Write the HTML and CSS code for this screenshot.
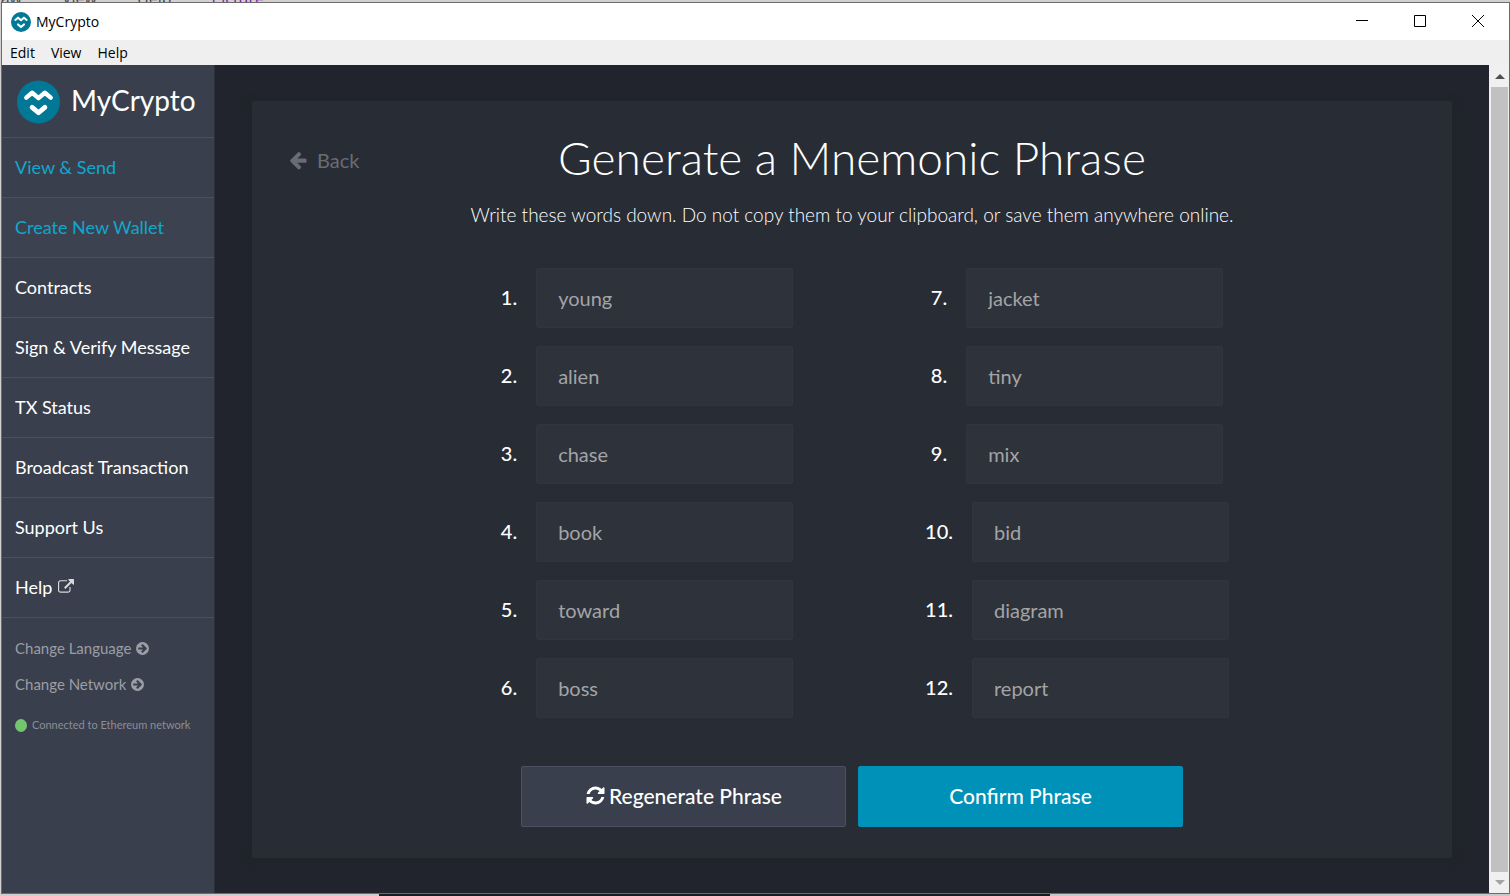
FILE: index.html
```
<!DOCTYPE html>
<html lang="en">
<head>
<meta charset="utf-8">
<title>MyCrypto</title>
<link rel="stylesheet" href="styles.css">
</head>
<body>
<svg class="sprite" aria-hidden="true">
  <symbol id="logo" viewBox="0 0 44 44"><circle cx="22" cy="22" r="22" fill="#007896"/><path d="M9.500 17.500L15.500 12.500L22 18L28.500 12.500L34.500 17.500" fill="none" stroke="#fff" stroke-width="4.600" stroke-linecap="round" stroke-linejoin="round"/><path d="M15.500 27.500L22 33L28.500 27.500" fill="none" stroke="#fff" stroke-width="5" stroke-linecap="round" stroke-linejoin="round"/></symbol>
  <symbol id="arrow-circle" viewBox="0 0 1792 1792"><path d="M1413 896q0-27-18-45l-91-91-362-362q-18-18-45-18t-45 18l-91 91q-18 18-18 45t18 45l189 189h-502q-26 0-45 19t-19 45v128q0 26 19 45t45 19h502l-189 189q-19 19-19 45t19 45l91 91q18 18 45 18t45-18l362-362 91-91q18-18 18-45zm251 0q0 209-103 385.500t-279.500 279.500-385.500 103-385.500-103-279.500-279.500-103-385.500 103-385.500 279.500-279.500 385.500-103 385.500 103 279.500 279.500 103 385.500z"/></symbol>
</svg>
<div class="backdrop" aria-hidden="true"><span>Draw</span><span>View</span><span>Help</span><span class="picture-tab">Picture</span></div>
<div class="window">
  <header class="titlebar">
    <svg class="app-icon"><use href="#logo"/></svg>
    <span class="app-name">MyCrypto</span>
    <div class="controls">
      <button type="button" aria-label="Minimize"><svg viewBox="0 0 12 12"><path d="M0 5.500H12"/></svg></button>
      <button type="button" aria-label="Maximize"><svg viewBox="0 0 12 12"><path d="M.5 .5H11.500V11.500H.5Z"/></svg></button>
      <button type="button" aria-label="Close"><svg viewBox="0 0 12 12"><path d="M0 0L12 12M12 0L0 12"/></svg></button>
    </div>
  </header>
  <nav class="menubar" aria-label="Menu"><button type="button">Edit</button><button type="button">View</button><button type="button">Help</button></nav>
  <div class="content">
    <aside class="sidebar">
      <a class="brand" href="#"><svg class="brand-icon"><use href="#logo"/></svg><span>MyCrypto</span></a>
      <nav class="nav">
        <a class="active" href="#">View &amp; Send</a>
        <a class="active current" href="#">Create New Wallet</a>
        <a href="#">Contracts</a>
        <a href="#">Sign &amp; Verify Message</a>
        <a href="#">TX Status</a>
        <a href="#">Broadcast Transaction</a>
        <a href="#">Support Us</a>
        <a href="#">Help <svg class="external" viewBox="0 0 1792 1792"><path d="M1408 928v320q0 119-84.500 203.500t-203.500 84.500h-832q-119 0-203.500-84.500t-84.500-203.500v-832q0-119 84.500-203.500t203.500-84.500h704q14 0 23 9t9 23v64q0 14-9 23t-23 9h-704q-66 0-113 47t-47 113v832q0 66 47 113t113 47h832q66 0 113-47t47-113v-320q0-14 9-23t23-9h64q14 0 23 9t9 23zm384-864v512q0 26-19 45t-45 19-45-19l-176-176-652 652q-10 10-23 10t-23-10l-114-114q-10-10-10-23t10-23l652-652-176-176q-19-19-19-45t19-45 45-19h512q26 0 45 19t19 45z"/></svg></a>
      </nav>
      <div class="settings">
        <button type="button">Change Language <svg><use href="#arrow-circle"/></svg></button>
        <button type="button">Change Network <svg><use href="#arrow-circle"/></svg></button>
      </div>
      <p class="status"><span class="dot"></span>Connected to Ethereum network</p>
    </aside>
    <main class="main">
      <section class="panel">
        <button type="button" class="back"><svg viewBox="0 0 1792 1792"><path d="M1664 896v128q0 53-32.500 90.500t-84.500 37.500h-704l293 294q38 36 38 90t-38 90l-75 76q-37 37-90 37-52 0-91-37l-651-652q-37-37-37-90 0-52 37-91l651-650q38-38 91-38 52 0 90 38l75 74q38 38 38 91t-38 91l-293 293h704q52 0 84.500 37.500t32.500 90.500z"/></svg>Back</button>
        <h1>Generate a Mnemonic Phrase</h1>
        <p class="lead">Write these words down. Do not copy them to your clipboard, or save them anywhere online.</p>
        <div class="words">
          <div class="row"><label for="w1">1.</label><input id="w1" type="text" value="young" readonly></div>
          <div class="row"><label for="w2">2.</label><input id="w2" type="text" value="alien" readonly></div>
          <div class="row"><label for="w3">3.</label><input id="w3" type="text" value="chase" readonly></div>
          <div class="row"><label for="w4">4.</label><input id="w4" type="text" value="book" readonly></div>
          <div class="row"><label for="w5">5.</label><input id="w5" type="text" value="toward" readonly></div>
          <div class="row"><label for="w6">6.</label><input id="w6" type="text" value="boss" readonly></div>
          <div class="row"><label for="w7">7.</label><input id="w7" type="text" value="jacket" readonly></div>
          <div class="row"><label for="w8">8.</label><input id="w8" type="text" value="tiny" readonly></div>
          <div class="row"><label for="w9">9.</label><input id="w9" type="text" value="mix" readonly></div>
          <div class="row"><label for="w10">10.</label><input id="w10" type="text" value="bid" readonly></div>
          <div class="row"><label for="w11">11.</label><input id="w11" type="text" value="diagram" readonly></div>
          <div class="row"><label for="w12">12.</label><input id="w12" type="text" value="report" readonly></div>
        </div>
        <div class="actions">
          <button type="button" class="btn"><svg viewBox="0 0 1792 1792"><path d="M1639 1056q0 5-1 7-64 268-268 434.500t-478 166.500q-146 0-282.500-55t-243.500-157l-129 129q-19 19-45 19t-45-19-19-45v-448q0-26 19-45t45-19h448q26 0 45 19t19 45-19 45l-137 137q71 66 161 102t187 36q134 0 250-65t186-179q11-17 53-117 8-23 30-23h192q13 0 22.500 9.500t9.500 22.500zm25-800v448q0 26-19 45t-45 19h-448q-26 0-45-19t-19-45 19-45l138-138q-148-137-349-137-134 0-250 65t-186 179q-11 17-53 117-8 23-30 23h-199q-13 0-22.500-9.500t-9.500-22.500v-7q65-268 270-434.500t480-166.500q146 0 284 55.500t245 156.500l130-129q19-19 45-19t45 19 19 45z"/></svg>Regenerate Phrase</button>
          <button type="button" class="btn primary">Confirm Phrase</button>
        </div>
      </section>
    </main>
    <div class="scrollbar" aria-hidden="true">
      <svg viewBox="0 0 10 5"><path d="M5 0L10 5H0Z" fill="#505050"/></svg>
      <div class="thumb"></div>
      <svg viewBox="0 0 10 5"><path d="M0 0H10L5 5Z" fill="#a3a3a3"/></svg>
    </div>
  </div>
</div>
</body>
</html>
```
FILE: styles.css
```
* { box-sizing: border-box; }
body {
  margin: 0;
  min-height: 100vh;
  display: flex;
  flex-direction: column;
  padding: 0 0 2px 1px;
  background: linear-gradient(90deg, #d0cecd 0 379px, #1b1c23 379px 1050px, #c8c8c8 1050px) bottom / 100% 2px no-repeat, #d3d0cf;
  font-family: Lato, "Open Sans", sans-serif;
  color: #fff;
}
button, input { font: inherit; color: inherit; }
button { background: none; border: 0; padding: 0; }
a { color: inherit; text-decoration: none; }
.sprite { display: none; }
.backdrop {
  display: flex;
  gap: 40px;
  height: 2px;
  overflow: hidden;
  align-items: flex-end;
  font: 16px/8px "Open Sans", sans-serif;
  color: #444;
}
.backdrop span:first-child { width: 21px; direction: rtl; }
.picture-tab { color: #7719aa; }
.window {
  flex: 1;
  display: flex;
  flex-direction: column;
  border: 1px solid #6b6b6b;
}
.titlebar {
  display: flex;
  align-items: center;
  height: 37px;
  padding-left: 9px;
  background: #fff;
  color: #000;
  font: 14px "Open Sans", sans-serif;
}
.app-icon { width: 20px; height: 20px; margin-right: 5px; }
.controls { display: flex; margin: 0 2px 2px auto; }
.controls button { width: 58px; height: 35px; display: grid; place-items: center; }
.controls svg { width: 12px; height: 12px; fill: none; stroke: #000; }
.menubar {
  display: flex;
  align-items: center;
  gap: 16px;
  height: 25px;
  padding-left: 8px;
  background: #efefef;
  color: #000;
  font: 14px "Open Sans", sans-serif;
}
.content { flex: 1; display: flex; }
.sidebar {
  width: 213px;
  flex: none;
  background: #3a3f4d;
  border-right: 1px solid #2c303a;
}
.brand {
  display: flex;
  align-items: center;
  height: 72px;
  padding: 2px 0 0 15px;
  gap: 11px;
  font-size: 28px;
}
.brand span { padding-bottom: 4px; }
.brand-icon { width: 43px; height: 44px; }
.nav { border-bottom: 1px solid #4b5060; }
.nav a {
  display: flex;
  align-items: center;
  gap: 6px;
  height: 60px;
  padding: 0 0 2px 13px;
  border-top: 1px solid #4b5060;
  font-size: 18px;
}
.nav .active { color: #0fa8cd; }
.nav .current { background: #3d4251; }
.external { width: 16px; height: 16px; fill: #d8d9db; }
.settings { padding: 12px 0 0 13px; color: #9b9ea5; }
.settings button {
  display: flex;
  align-items: center;
  gap: 4px;
  height: 36px;
  font-size: 15px;
}
.settings svg { width: 15px; height: 15px; fill: currentColor; }
.status {
  display: flex;
  align-items: center;
  gap: 5px;
  margin: 15px 0 0 13px;
  font-size: 11px;
  line-height: 16px;
  color: #8b8e96;
}
.dot { width: 12px; height: 13px; border-radius: 50%; background: #73c66f; }
.main {
  flex: 1;
  min-width: 0;
  padding: 36px 37px 35px;
  background: #21242c;
}
.panel {
  position: relative;
  padding: 30px 36px 31px;
  border-radius: 2px;
  background: #282c35;
  box-shadow: 0 1px 10px #22252a;
  text-align: center;
}
.back {
  position: absolute;
  top: 44px;
  left: 36px;
  display: flex;
  align-items: center;
  gap: 9px;
  font-size: 20px;
  line-height: 30px;
  color: #686c75;
}
.back svg { width: 20px; height: 20px; fill: currentColor; }
h1 { margin: 0; font-size: 46px; font-weight: 300; line-height: 54px; }
.lead { margin: 15px 0 38px; font-size: 19px; font-weight: 300; line-height: 30px; }
.words {
  display: grid;
  grid-template: repeat(6, 60px) / repeat(2, 430px);
  grid-auto-flow: column;
  justify-content: center;
  gap: 18px 0;
}
.row { display: flex; align-items: center; justify-content: center; }
.row label { padding: 0 19px 2px 20px; font-size: 20px; font-weight: 500; }
.row input {
  width: 257px;
  height: 60px;
  padding: 0 21px;
  border: 1px solid #31353e;
  border-radius: 2px;
  background: #2e323a;
  color: #a3a4a6;
  font-size: 20px;
  outline: 0;
}
.actions { display: flex; justify-content: center; gap: 12px; margin-top: 48px; }
.btn {
  display: flex;
  align-items: center;
  justify-content: center;
  gap: 3px;
  width: 325px;
  height: 61px;
  padding-bottom: 2px;
  border: 1px solid #4b5163;
  border-radius: 2px;
  background: #3a3f4d;
  font-size: 21px;
  font-weight: 500;
}
.btn svg { width: 21px; height: 21px; fill: currentColor; }
.primary { background: #0091b8; border-color: #0091b8; }
.scrollbar {
  display: flex;
  flex-direction: column;
  align-items: center;
  width: 20px;
  padding: 9px 1px 8px 2px;
  gap: 8px;
  background: #f0f0f0;
}
.scrollbar svg { width: 10px; height: 5px; }
.thumb { flex: 1; width: 17px; background: #c1c1c1; }
```
